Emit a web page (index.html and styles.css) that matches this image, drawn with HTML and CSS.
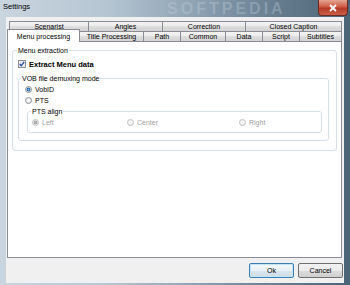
FILE: index.html
```html
<!DOCTYPE html>
<html lang="en">
<head>
  <meta charset="UTF-8" />
  <title>Settings</title>
  <link rel="stylesheet" href="styles.css">
</head>
<body>

  <div class="window">
    <!-- Title bar -->
    <div class="titlebar">
      <span class="title">Settings</span>
      <span class="watermark">SOFTPEDIA</span>
      <span class="close">
        <svg width="10" height="8" viewBox="0 0 10 8"><path d="M2 1 L8 7 M8 1 L2 7" stroke="#fff" stroke-width="1.8"/></svg>
      </span>
    </div>

    <div class="client">
      <!-- Tabs -->
      <div class="tab-row row-back">
        <div class="tab t-scenarist">Scenarist</div>
        <div class="tab t-angles">Angles</div>
        <div class="tab t-correction">Correction</div>
        <div class="tab t-caption">Closed Caption</div>
      </div>
      <div class="tab-row">
        <div class="tab active t-menu">Menu processing</div>
        <div class="tab t-title">Title Processing</div>
        <div class="tab t-path">Path</div>
        <div class="tab t-common">Common</div>
        <div class="tab t-data">Data</div>
        <div class="tab t-script">Script</div>
        <div class="tab t-subs">Subtitles</div>
      </div>

      <!-- Page -->
      <div class="panel">
        <div class="group g-menu">
          <span class="caption">Menu extraction</span>
          <div class="check-row">
            <svg width="8" height="8" viewBox="0 0 8 8"><rect x="0.5" y="0.5" width="7" height="7" fill="#e6ecf2" stroke="#8e8f8f"/><path d="M1.8 4 L3.2 5.8 L6.2 1.8" fill="none" stroke="#23479a" stroke-width="1.3"/></svg>
            <b>Extract Menu data</b>
          </div>

          <div class="group g-vob">
            <span class="caption">VOB file demuxing mode</span>
            <div class="radio-row"><span class="radio on"></span>VobID</div>
            <div class="radio-row"><span class="radio"></span>PTS</div>

            <div class="group g-align">
              <span class="caption">PTS align</span>
              <div class="align-row">
                <div class="radio-row off a-left"><span class="radio on"></span>Left</div>
                <div class="radio-row off a-center"><span class="radio"></span>Center</div>
                <div class="radio-row off"><span class="radio"></span>Right</div>
              </div>
            </div>
          </div>
        </div>
      </div>

      <!-- Buttons -->
      <div class="buttons">
        <button class="btn default">Ok</button>
        <button class="btn">Cancel</button>
      </div>
    </div>
  </div>

</body>
</html>
```

FILE: styles.css
```css
* { margin:0; padding:0; box-sizing:border-box; }
body {
  width:350px; height:285px; overflow:hidden;
  font-family:"Liberation Sans", Arial, sans-serif; font-size:7px; color:#000;
}
.window {
  height:285px;
  display:flex; flex-direction:column;
  background: linear-gradient(90deg, #c9d5df 0%, #b6c6d3 30%, #8ea3b4 55%, #657c8f 80%, #4b6376 100%);
}

/* title bar */
.titlebar { height:17px; display:flex; align-items:flex-start; }
.title { padding:2px 0 0 3px; font-size:7.5px; line-height:9px; }
.watermark {
  margin-left:137px; font-size:16px; font-weight:bold; letter-spacing:3px;
  line-height:17px; color:rgba(205,218,230,0.3);
}
.close {
  margin-left:auto; margin-right:2px;
  width:30px; height:16px;
  display:flex; align-items:center; justify-content:center;
  background: linear-gradient(#e4a592, #cf5a45 45%, #b43a24 55%, #c9604a);
  border:1px solid #6a2b22; border-top:none;
  border-radius:0 0 4px 4px;
}

.client {
  flex:1;
  margin:0 6px 2px;
  padding:4px 2px 5px 1px;
  background:#f0f0f0;
  display:flex; flex-direction:column;
}

/* tabs */
.tab-row { display:flex; height:10px; }
.row-back { margin-left:2px; }
.tab {
  height:10px;
  border:1px solid #898c95; border-bottom:none; border-right:none;
  background: linear-gradient(#f3f3f3, #ebebeb 50%, #dedede 50%, #d2d2d2);
  text-align:center; line-height:9px; white-space:nowrap; overflow:hidden;
}
.tab:last-child { border-right:1px solid #898c95; }
.tab.active {
  position:relative; z-index:1;
  height:13px; margin-top:-2px; padding-top:2px;
  background:#fff; border-right:1px solid #898c95;
}
.tab.active + .tab { border-left:none; }

.t-scenarist { width:79px; }
.t-angles { width:74px; }
.t-correction { width:83px; }
.t-caption { width:97px; }
.t-menu { width:73px; }
.t-title { width:63px; }
.t-path { width:37px; }
.t-common { width:45px; }
.t-data { width:37px; }
.t-script { width:37px; }
.t-subs { width:43px; }

/* page */
.panel {
  height:217px;
  border:1px solid #898c95;
  background:#fff;
  padding:8px 4px 0;
}
.group {
  border:1px solid #d5dfe5;
  border-radius:3px;
  display:flex; flex-direction:column;
}
.caption {
  display:block; width:fit-content;
  margin-top:-5px; padding:0 1px;
  line-height:9px; background:#fff;
}
.g-menu .caption { margin-left:4px; }
.g-vob { margin:10px 7px 9px 5px; padding-left:6px; padding-right:0; }
.g-vob > .caption { margin-left:-4px; }
.g-align { margin:6px 6px 7px 2px; padding:0 0 5px 4px; }
.g-align > .caption { margin-left:-1px; }

.check-row {
  display:flex; align-items:center; gap:3px;
  height:8px; margin:5px 0 0 5px;
  font-size:7.5px;
}

.radio-row {
  display:flex; align-items:center; gap:3px;
  height:9px; margin-top:2px;
}
.radio {
  width:7px; height:7px; border-radius:50%;
  border:1px solid #8e8f8f;
  background: radial-gradient(circle, #fff 0, #dde3e8 100%);
}
.radio.on {
  background: radial-gradient(circle, #7fc0f0 0, #1b5d9e 1.6px, #dbe6ef 2.2px, #f4f6f8 100%);
}
.off { color:#a2a2a2; }
.off .radio { border-color:#c2c2c2; background:#f4f4f4; }
.off .radio.on { background: radial-gradient(circle, #b8b8b8 0, #a8a8a8 1.6px, #ececec 2.2px, #f6f6f6 100%); }

.align-row { display:flex; }
.a-left { width:95px; }
.a-center { width:112px; }

/* buttons */
.buttons {
  display:flex; justify-content:flex-end; gap:4px;
  margin:5px -1px 0 0;
}
.btn {
  width:45px; height:15px;
  font-family:"Liberation Sans", Arial, sans-serif; font-size:7px; color:#000;
  border:1px solid #707070; border-radius:2px;
  background: linear-gradient(#f2f2f2, #ebebeb 50%, #dddddd 50%, #cfcfcf);
}
.btn.default {
  border-color:#3c7fb1;
  box-shadow: inset 0 0 0 1px #c4e5f8;
  background: linear-gradient(#f3f8fb, #e9f1f6 50%, #dbe7ef 50%, #d0dde7);
}
```
